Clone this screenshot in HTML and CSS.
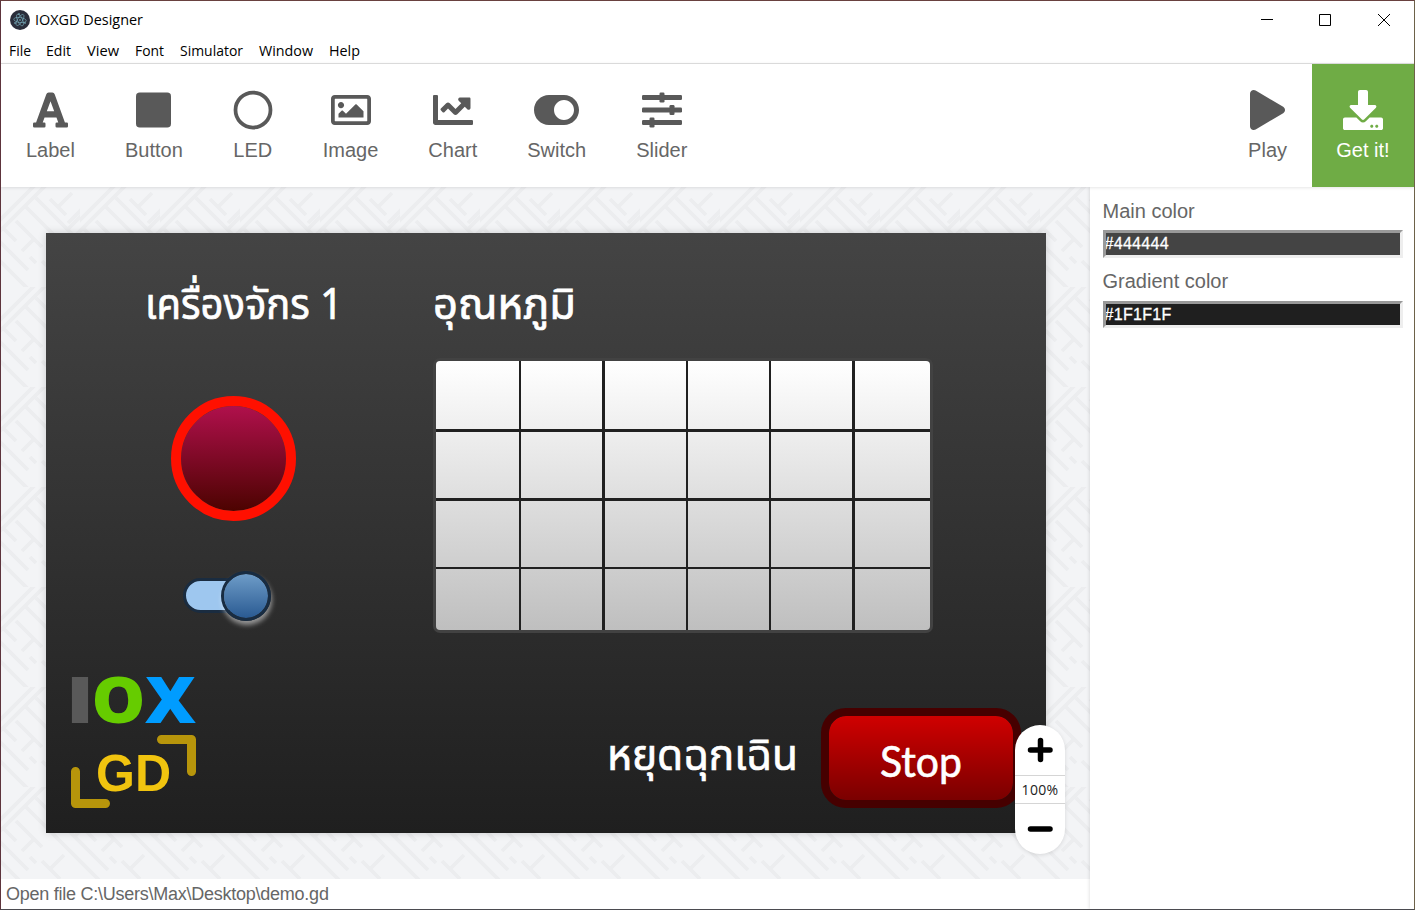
FILE: index.html
```html
<!DOCTYPE html>
<html lang="en">
<head>
<meta charset="utf-8">
<title>IOXGD Designer</title>
<link rel="stylesheet" href="styles.css">
</head>
<body>
<div class="window">
  <header class="titlebar">
    <svg class="app-icon" viewBox="0 0 20 20"><circle cx="10" cy="10" r="10" fill="#2b2e3b"/><g fill="none" stroke="#9feaf9" stroke-width=".6" opacity=".7"><ellipse cx="10" cy="10" rx="6.3" ry="2.5" transform="rotate(8 10 10)"/><ellipse cx="10" cy="10" rx="6.3" ry="2.5" transform="rotate(65 10 10)"/><ellipse cx="10" cy="10" rx="6.3" ry="2.5" transform="rotate(-58 10 10)"/></g><g fill="#9feaf9" opacity=".8"><circle cx="10" cy="10" r=".8"/><circle cx="5" cy="13" r=".8"/><circle cx="15" cy="13" r=".8"/><circle cx="9" cy="4" r=".8"/></g></svg>
    <svg class="title" viewBox="0 0 120 28"><text x="0" y="19" textLength="108" lengthAdjust="spacingAndGlyphs">IOXGD Designer</text></svg>
    <div class="controls">
      <svg viewBox="0 0 12 12"><path d="M0 5.500h12"/></svg>
      <svg viewBox="0 0 12 12"><path d="M.5.5h11v11H.5z"/></svg>
      <svg viewBox="0 0 12 12"><path d="M0 0l12 12M12 0L0 12"/></svg>
    </div>
  </header>
  <nav class="menu">
    <svg width="22" height="24"><text y="17" textLength="22" lengthAdjust="spacingAndGlyphs">File</text></svg>
    <svg width="25" height="24"><text y="17" textLength="25" lengthAdjust="spacingAndGlyphs">Edit</text></svg>
    <svg width="32" height="24"><text y="17" textLength="32" lengthAdjust="spacingAndGlyphs">View</text></svg>
    <svg width="29" height="24"><text y="17" textLength="29" lengthAdjust="spacingAndGlyphs">Font</text></svg>
    <svg width="63" height="24"><text y="17" textLength="63" lengthAdjust="spacingAndGlyphs">Simulator</text></svg>
    <svg width="54" height="24"><text y="17" textLength="54" lengthAdjust="spacingAndGlyphs">Window</text></svg>
    <svg width="31" height="24"><text y="17" textLength="31" lengthAdjust="spacingAndGlyphs">Help</text></svg>
  </nav>
  <div class="toolbar">
    <div class="tool"><svg viewBox="0 0 448 512"><path d="M432 416h-23.41L277.53 53.69A32 32 0 0 0 247.58 32h-47.16a32 32 0 0 0-29.95 21.69L39.41 416H16a16 16 0 0 0-16 16v32a16 16 0 0 0 16 16h128a16 16 0 0 0 16-16v-32a16 16 0 0 0-16-16h-19.58l23.3-64h152.56l23.3 64H304a16 16 0 0 0-16 16v32a16 16 0 0 0 16 16h128a16 16 0 0 0 16-16v-32a16 16 0 0 0-16-16zM176.85 272L224 142.51 271.15 272z"/></svg><span>Label</span></div>
    <div class="tool"><svg viewBox="0 0 448 512"><rect y="32" width="448" height="448" rx="48"/></svg><span>Button</span></div>
    <div class="tool"><svg viewBox="0 0 512 512"><circle cx="256" cy="256" r="224" fill="none" stroke="#595959" stroke-width="48"/></svg><span>LED</span></div>
    <div class="tool"><svg viewBox="0 0 512 512"><path d="M464 64H48C21.49 64 0 85.49 0 112v288c0 26.51 21.49 48 48 48h416c26.51 0 48-21.49 48-48V112c0-26.51-21.49-48-48-48zm-6 336H54a6 6 0 0 1-6-6V118a6 6 0 0 1 6-6h404a6 6 0 0 1 6 6v276a6 6 0 0 1-6 6zM128 152c-22.091 0-40 17.909-40 40s17.909 40 40 40 40-17.909 40-40-17.909-40-40-40zM96 352h320v-80l-87.515-87.515c-4.686-4.686-12.284-4.686-16.971 0L192 304l-39.515-39.515c-4.686-4.686-12.284-4.686-16.971 0L96 304v48z"/></svg><span>Image</span></div>
    <div class="tool"><svg viewBox="0 0 512 512"><path d="M496 384H64V80c0-8.84-7.16-16-16-16H16C7.16 64 0 71.16 0 80v336c0 17.67 14.33 32 32 32h464c8.84 0 16-7.16 16-16v-32c0-8.84-7.16-16-16-16zM464 96H345.94c-21.38 0-32.09 25.85-16.97 40.97l32.4 32.4L288 242.75l-73.37-73.37c-12.5-12.5-32.76-12.5-45.25 0l-68.69 68.69c-6.25 6.25-6.25 16.38 0 22.63l22.62 22.62c6.25 6.25 16.38 6.25 22.63 0L192 237.25l73.37 73.37c12.5 12.5 32.76 12.5 45.25 0l96-96 32.4 32.4c15.12 15.12 40.97 4.41 40.97-16.97V112c.01-8.84-7.15-16-15.99-16z"/></svg><span>Chart</span></div>
    <div class="tool"><svg viewBox="0 0 576 512"><path d="M384 64H192C86 64 0 150 0 256s86 192 192 192h192c106 0 192-86 192-192S490 64 384 64zm0 320c-70.8 0-128-57.3-128-128 0-70.8 57.3-128 128-128 70.8 0 128 57.3 128 128 0 70.8-57.3 128-128 128z"/></svg><span>Switch</span></div>
    <div class="tool"><svg viewBox="0 0 512 512"><rect y="64" width="512" height="64" rx="16"/><rect y="224" width="512" height="64" rx="16"/><rect y="384" width="512" height="64" rx="16"/><rect x="224" y="32" width="64" height="128" rx="16"/><rect x="352" y="192" width="64" height="128" rx="16"/><rect x="96" y="352" width="64" height="128" rx="16"/></svg><span>Slider</span></div>
    <div class="tool play"><svg viewBox="0 0 448 512"><path d="M424.4 214.7L72.4 6.6C43.8-10.3 0 6.1 0 47.9V464c0 37.5 40.7 60.1 72.4 41.3l352-208c31.4-18.5 31.500-64.1 0-82.6z"/></svg><span>Play</span></div>
    <div class="tool get"><svg viewBox="0 0 512 512"><path d="M216 0h80c13.3 0 24 10.7 24 24v168h87.7c17.8 0 26.7 21.5 14.1 34.1L269.7 378.3c-7.5 7.5-19.8 7.5-27.3 0L90.1 226.1c-12.6-12.6-3.7-34.1 14.1-34.1H192V24c0-13.3 10.7-24 24-24zm296 376v112c0 13.3-10.7 24-24 24H24c-13.3 0-24-10.7-24-24V376c0-13.3 10.7-24 24-24h146.7l49 49c20.1 20.1 52.5 20.1 72.6 0l49-49H488c13.3 0 24 10.7 24 24zm-124 88c0-11-9-20-20-20s-20 9-20 20 9 20 20 20 20-9 20-20zm64 0c0-11-9-20-20-20s-20 9-20 20 9 20 20 20 20-9 20-20z"/></svg><span>Get it!</span></div>
  </div>
  <div class="main">
    <div class="left">
      <div class="workspace">
        <svg class="pattern" width="1089" height="692">
          <defs><pattern id="weave" width="80" height="100" x="-1" y="0" patternUnits="userSpaceOnUse">
            <path d="M36-3L-9 42M47-3L-6 50M113-3L68 42M127-3L74 50M25 19L108 102M36 11L108 83M-55 19L28 102M-44 11L28 83M50 12L66 28M58 20L72 6M68 36L84 20M16 34L42 60M34 52L22 64M4 42L16 54M42 74L60 92M50 82L64 68M30 70L36 76"/>
          </pattern></defs>
          <rect width="1089" height="692" fill="url(#weave)"/>
        </svg>
        <div class="screen">
          <svg class="words" viewBox="0 0 1000 600">
            <text x="99" y="86" textLength="198" lengthAdjust="spacingAndGlyphs">เครื่องจักร 1</text>
            <text x="387" y="86" textLength="143" lengthAdjust="spacingAndGlyphs">อุณหภูมิ</text>
            <text x="561" y="537" textLength="191" lengthAdjust="spacingAndGlyphs">หยุดฉุกเฉิน</text>
          </svg>
          <div class="led"></div>
          <div class="switch"><div class="knob"></div></div>
          <svg class="chart" viewBox="0 0 500 275">
            <defs><linearGradient id="plot" x2="0" y2="1"><stop stop-color="#fff"/><stop offset="1" stop-color="#bfbfbf"/></linearGradient></defs>
            <rect width="500" height="275" rx="7" fill="#424242"/>
            <rect x="3" y="3" width="494" height="269" rx="4" fill="url(#plot)"/>
            <path fill="#202020" d="M86 3h2v269h-2zM169 3h3v269h-3zM253 3h2v269h-2zM336 3h2v269h-2zM419 3h3v269h-3zM3 71h494v3H3zM3 140h494v3H3zM3 209h494v2H3z"/>
          </svg>
          <svg class="logo" viewBox="0 0 126 132">
            <text class="heavy" x="-5.500" y="47.2" fill="#595959" textLength="29" lengthAdjust="spacingAndGlyphs">I</text>
            <text class="heavy" x="20.500" y="47.2" fill="#6c0" textLength="54" lengthAdjust="spacingAndGlyphs">O</text>
            <text class="heavy" x="74" y="47.2" fill="#009cff" textLength="51" lengthAdjust="spacingAndGlyphs">X</text>
            <text class="gd" x="25" y="114.500" fill="#f1c40f" textLength="75" lengthAdjust="spacingAndGlyphs">GD</text>
            <path d="M90.500 4.500H120.500V36.500M4.500 36.500V68.500H34.500" transform="translate(0 59)" fill="none" stroke="#b7950b" stroke-width="9" stroke-linecap="round" stroke-linejoin="round"/>
          </svg>
          <div class="stop"><svg width="110" height="76"><text x="14" y="54" textLength="82" lengthAdjust="spacingAndGlyphs">Stop</text></svg></div>
        </div>
        <div class="zoom">
          <svg class="plus" viewBox="0 0 50 50"><path d="M15.500 25h19.500M25.500 15.500v19"/></svg>
          <span>100%</span>
          <svg class="minus" viewBox="0 0 50 50"><path d="M15.500 25h19.500"/></svg>
        </div>
      </div>
      <footer class="status">Open file C:\Users\Max\Desktop\demo.gd</footer>
    </div>
    <aside class="props">
      <label>Main color</label>
      <input class="field main-color" value="#444444">
      <label>Gradient color</label>
      <input class="field gradient-color" value="#1F1F1F">
    </aside>
  </div>
</div>
</body>
</html>
```
FILE: styles.css
```css
* { box-sizing: border-box; }
body { margin: 0; font-family: "Liberation Sans", Arial, sans-serif; color: #666; }
svg { display: block; flex: none; }
.window { width: 1415px; height: 910px; background: #fff; border: 1px solid; border-color: #69413f #6d6249 #4b4b50 #5d343c; display: flex; flex-direction: column; overflow: hidden; }
.titlebar { height: 37px; display: flex; align-items: center; padding: 0 24px 0 9px; flex: none; }
.app-icon { width: 20px; height: 20px; margin-right: 5px; }
.title { width: 120px; height: 28px; overflow: visible; }
.title text, .menu text { font: 15px "Open Sans", "Noto Sans", sans-serif; fill: #000; }
.controls { margin-left: auto; display: flex; gap: 47px; }
.controls svg { width: 12px; height: 12px; fill: none; stroke: #000; stroke-width: 1; }
.controls svg:first-child { margin-right: -1px; }
.menu { height: 25px; padding-left: 8px; display: flex; gap: 16px; align-items: center; flex: none; }
.menu svg { overflow: visible; }
.menu svg:first-child { margin-right: -1px; }
.toolbar { height: 124px; display: flex; border-top: 1px solid #dadada; position: relative; z-index: 2; box-shadow: 0 1px 3px rgba(0,0,0,.1); background: #fff; flex: none; }
.tool { padding: 26px 25px 0; display: flex; flex-direction: column; align-items: center; font-size: 20px; line-height: 23px; color: #666; }
.tool svg { height: 40px; fill: #595959; margin-bottom: 9px; }
.play { margin-left: auto; }
.tool.get { width: 102px; padding: 26px 0 0; background: #6fac45; color: #fff; }
.tool.get svg { fill: #fff; }
.main { flex: 1; display: flex; min-height: 0; }
.left { width: 1089px; display: flex; flex-direction: column; }
.workspace { height: 692px; background: #f3f4f6; position: relative; padding: 46px 45px; overflow: hidden; }
.pattern { position: absolute; left: 0; top: 0; }
.pattern path { fill: none; stroke: #ecedef; stroke-width: 3.8; }
.screen { position: relative; width: 1000px; height: 600px; background: linear-gradient(#444, #1f1f1f); box-shadow: 0 0 8px rgba(0,0,0,.16); }
.words { position: absolute; width: 1000px; height: 600px; }
.words text { font: 43px "Noto Sans Thai", "Noto Sans", sans-serif; fill: #fff; stroke: #fff; stroke-width: .7; }
.led { position: absolute; left: 125px; top: 163px; width: 125px; height: 125px; border-radius: 50%; border: 10px solid #ff1000; background: linear-gradient(#b0104c, #4c0300) padding-box; }
.switch { position: absolute; left: 137px; top: 345px; width: 80px; height: 35px; border: 3px solid #1a2c40; border-radius: 18px; background: #9ec7ef; }
.knob { position: absolute; left: 35px; top: -10px; width: 50px; height: 50px; border: 3px solid #182c42; border-radius: 50%; background: linear-gradient(#6e9cc8, #2a5a92) padding-box; box-shadow: 1px 4px 5px rgba(255,255,255,.5); }
.chart { position: absolute; left: 387px; top: 125px; width: 500px; height: 275px; }
.logo { position: absolute; left: 25px; top: 443px; width: 126px; height: 132px; overflow: visible; }
.heavy { font: 900 63px "Open Sans", sans-serif; }
.gd { font: bold 52px "Liberation Sans", Arial, sans-serif; }
.stop { position: absolute; left: 775px; top: 475px; width: 200px; height: 100px; border: 8px solid #460000; border-radius: 25px; background: linear-gradient(#d00000, #7a0000) padding-box; display: flex; justify-content: center; align-items: center; padding-top: 5px; }
.stop svg { overflow: visible; }
.stop text { font: 42px Lato, sans-serif; fill: #fff; stroke: #fff; stroke-width: .6; }
.zoom { position: absolute; left: 1014px; top: 538px; width: 50px; height: 129px; border-radius: 25px; background: #fff; box-shadow: 0 1px 4px rgba(0,0,0,.12); }
.zoom svg { width: 50px; height: 50px; fill: none; stroke: #000; stroke-width: 5.5; stroke-linecap: round; }
.zoom span { display: block; height: 29px; border: 1px solid #d5d5d5; border-width: 1px 0; font: 14px/27px "Open Sans", sans-serif; color: #222; text-align: center; letter-spacing: .3px; }
.status { height: 30px; padding: 5px; font-size: 18px; line-height: 20px; letter-spacing: -.25px; white-space: nowrap; }
.props { flex: 1; padding: 12px 11px 0 12.5px; box-shadow: -1px 0 3px rgba(0,0,0,.1); background: #fff; position: relative; }
.props label { display: block; font-size: 20px; line-height: 24px; }
.field { display: block; width: 300px; height: 28px; margin: 7px 0 11px; padding: 0; border: 3px solid; border-color: #999 #eee #eee #999; font: 16px "Liberation Sans", Arial, sans-serif; letter-spacing: .3px; color: #fff; border-radius: 0; text-indent: -1px; -webkit-text-stroke: .3px #fff; }
.main-color { background: #444; }
.gradient-color { background: #1f1f1f; height: 27px; margin-top: 8px; }
```
